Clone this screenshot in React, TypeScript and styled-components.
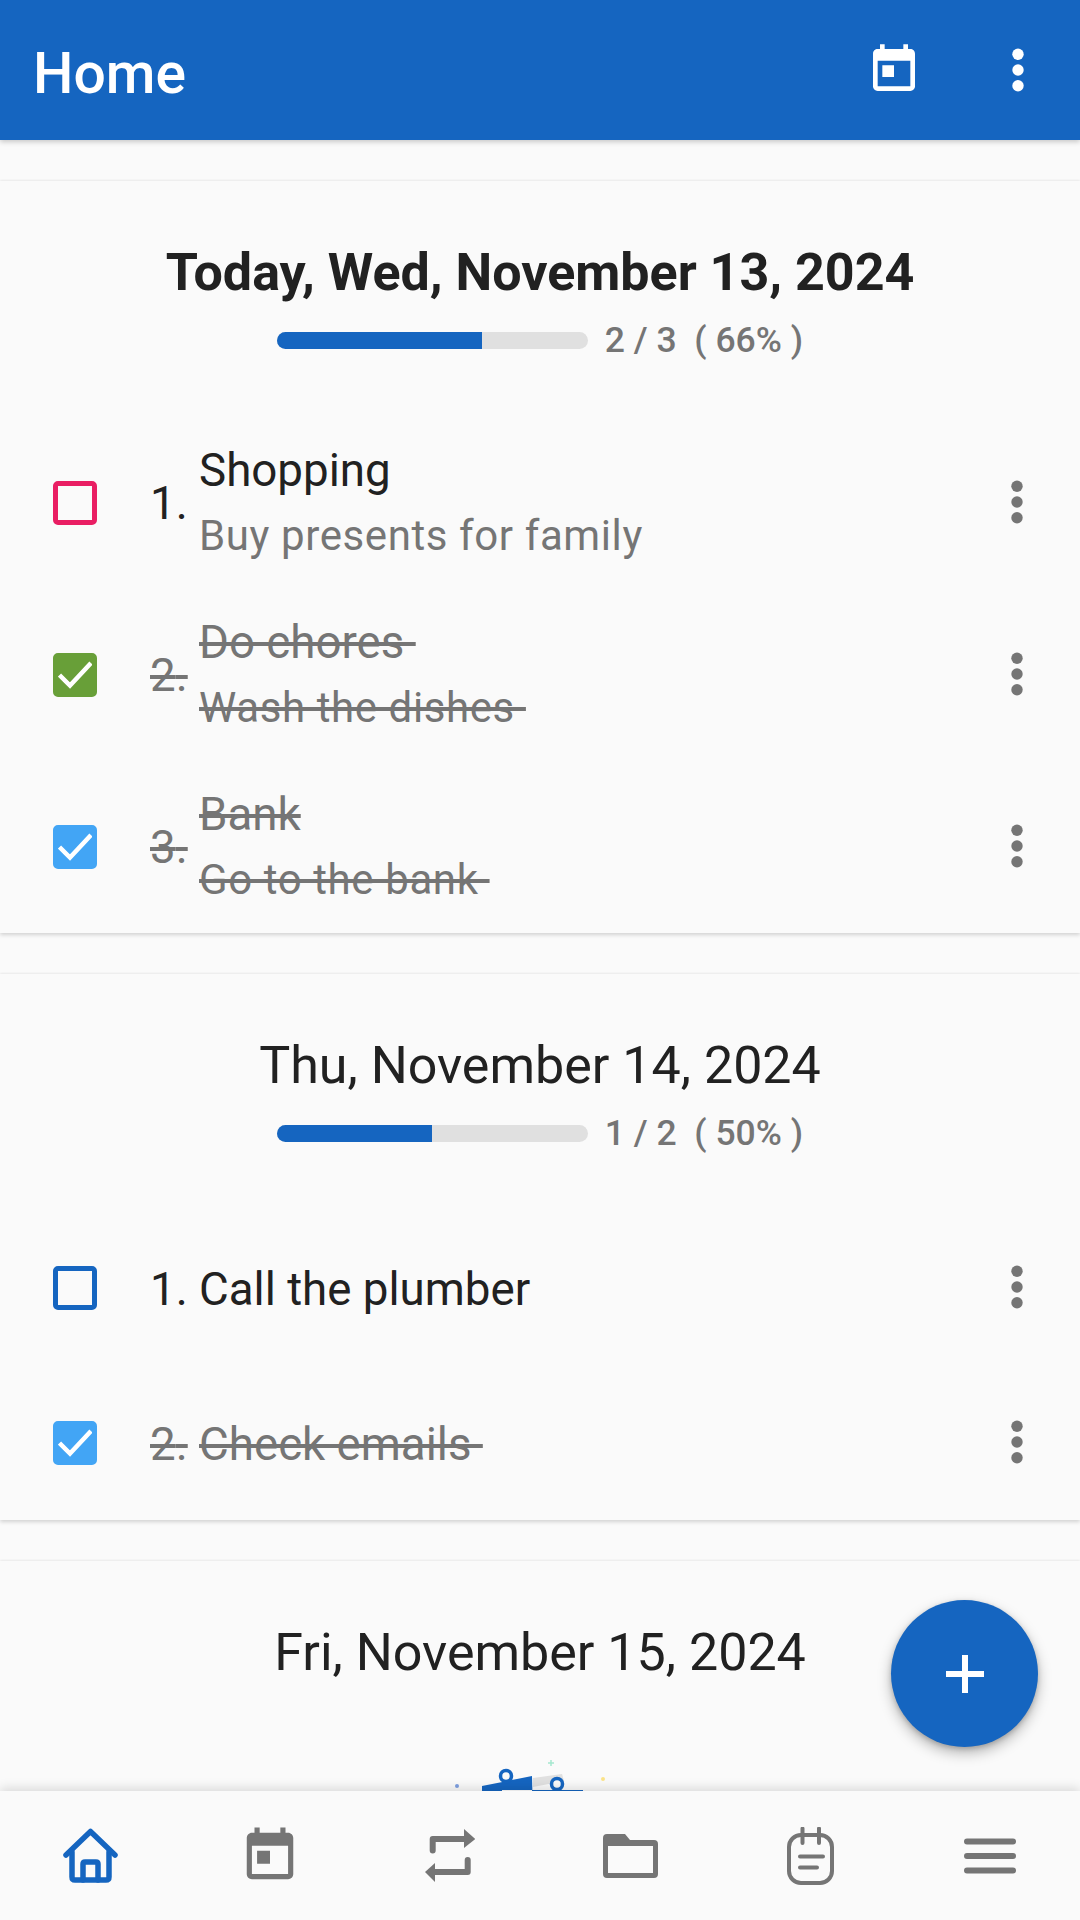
import React from 'react'
import styled, { createGlobalStyle } from 'styled-components'

const BLUE = '#1565c0'
const GREY = '#757575'
const INK = '#212121'

const GlobalStyle = createGlobalStyle`
    html, body {
        margin: 0;
        padding: 0;
        background: #fafafa;
    }
    * {
        box-sizing: border-box;
    }
`

const Screen = styled.div`
    width: 1080px;
    height: 1920px;
    display: flex;
    flex-direction: column;
    overflow: hidden;
    position: relative;
    background: #fafafa;
    font-family: Roboto, "Noto Sans", sans-serif;
    color: ${INK};
`

const AppBar = styled.header`
    height: 140px;
    flex: none;
    display: flex;
    align-items: center;
    padding: 0 54px 0 33px;
    background: ${BLUE};
    box-shadow: 0 2px 5px rgba(0, 0, 0, 0.2);
    position: relative;
    z-index: 2;
`

const AppTitle = styled.h1`
    flex: 1;
    margin: 6px 0 0;
    font-size: 57px;
    font-weight: 500;
    color: #fff;
`

const AppActions = styled.div`
    display: flex;
    align-items: center;
    gap: 88px;
    margin-top: -1px;
    color: #fff;
`

const Main = styled.main`
    flex: 1;
    min-height: 0;
    overflow: hidden;
    padding-top: 41px;
`

const Card = styled.section`
    margin-bottom: 41px;
    background: #fafafa;
    box-shadow: 0 2px 4px rgba(0, 0, 0, 0.16), 0 -1px 2px rgba(0, 0, 0, 0.05);
`

const DayHeader = styled.div`
    height: 236px;
    padding-top: 61px;
    display: flex;
    flex-direction: column;
    align-items: center;
`

const DayTitle = styled.h2<{ $today?: boolean }>`
    margin: 0;
    height: 62px;
    line-height: 62px;
    font-size: 52px;
    font-weight: ${(p) => (p.$today ? 700 : 400)};
    color: ${INK};
`

const ProgressRow = styled.div`
    margin-top: 19px;
    height: 34px;
    display: flex;
    align-items: center;
    gap: 17px;
`

const Track = styled.div`
    width: 311px;
    height: 17px;
    border-radius: 9px;
    overflow: hidden;
    background: #e0e0e0;
`

const Fill = styled.div<{ $pct: number }>`
    width: ${(p) => p.$pct}%;
    height: 100%;
    background: ${BLUE};
`

const ProgressText = styled.span`
    font-size: 35.5px;
    font-weight: 500;
    color: ${GREY};
    white-space: pre;
`

const Row = styled.div<{ $height: number }>`
    height: ${(p) => p.$height}px;
    display: flex;
    align-items: center;
    padding: 0 55px 0 53px;
    color: ${GREY};
`

const CheckBox = styled.span<{ $color: string; $checked?: boolean }>`
    width: 44px;
    height: 44px;
    flex: none;
    display: flex;
    align-items: center;
    justify-content: center;
    border-radius: 5px;
    border: 5px solid ${(p) => p.$color};
    background: ${(p) => (p.$checked ? p.$color : 'transparent')};
`

const RowNumber = styled.span<{ $done?: boolean; $single?: boolean }>`
    margin: ${(p) => (p.$single ? '3px' : '0')} 0 0 53px;
    width: 49px;
    flex: none;
    font-size: 45.7px;
    white-space: pre;
    color: ${(p) => (p.$done ? GREY : INK)};
    text-decoration: ${(p) => (p.$done ? 'line-through' : 'none')};
`

const RowText = styled.div<{ $single?: boolean }>`
    flex: 1;
    min-width: 0;
    margin-top: ${(p) => (p.$single ? '3px' : '0')};
`

const TaskName = styled.div<{ $done?: boolean }>`
    height: 65px;
    line-height: 65px;
    font-size: 45.7px;
    white-space: pre;
    color: ${(p) => (p.$done ? GREY : INK)};
    text-decoration: ${(p) => (p.$done ? 'line-through' : 'none')};
`

const TaskNote = styled.div<{ $done?: boolean }>`
    height: 65px;
    line-height: 65px;
    font-size: 42px;
    letter-spacing: 0.6px;
    white-space: pre;
    color: ${GREY};
    text-decoration: ${(p) => (p.$done ? 'line-through' : 'none')};
`

const RowMore = styled.span`
    display: flex;
    margin-bottom: 2px;
`

const Illustration = styled.svg`
    display: block;
    flex: none;
    margin-top: 73px;
`

const Fab = styled.button`
    position: absolute;
    right: 42px;
    bottom: 173px;
    width: 147px;
    height: 147px;
    padding: 0;
    border: none;
    border-radius: 50%;
    display: flex;
    align-items: center;
    justify-content: center;
    color: #fff;
    background: ${BLUE};
    box-shadow: 0 6px 14px rgba(0, 0, 0, 0.28), 0 2px 5px rgba(0, 0, 0, 0.18);
    z-index: 3;
`

const BottomNav = styled.nav`
    height: 129px;
    flex: none;
    display: flex;
    background: #fafafa;
    box-shadow: 0 -3px 10px rgba(0, 0, 0, 0.13);
    position: relative;
    z-index: 2;
`

const NavItem = styled.div<{ $active?: boolean }>`
    flex: 1;
    display: flex;
    align-items: center;
    justify-content: center;
    color: ${(p) => (p.$active ? BLUE : GREY)};
`

const EVENT_PATH = 'M19 3h-1V1h-2v2H8V1H6v2H5c-1.11 0-1.99.9-1.99 2L3 19c0 1.1.89 2 2 2h14c1.1 0 2-.9 2-2V5c0-1.1-.9-2-2-2zm0 16H5V8h14v11zM7 10h5v5H7z'

const EventIcon = ({ size }: { size: number }) => (
    <svg width={size} height={size} viewBox="0 0 24 24" fill="currentColor">
        <path d={EVENT_PATH} />
    </svg>
)

const MoreIcon = ({ color }: { color: string }) => (
    <svg width="16" height="48" viewBox="0 0 16 48" fill={color}>
        <circle cx="8" cy="8.3" r="5.7" />
        <circle cx="8" cy="24" r="5.7" />
        <circle cx="8" cy="39.7" r="5.7" />
    </svg>
)

const CheckMark = () => (
    <svg width="34" height="34" viewBox="0 0 34 34" fill="none" stroke="#fff" strokeWidth="4.5">
        <path d="M1.5 17 L12 27.5 L33 5" />
    </svg>
)

const HomeIcon = () => (
    <svg width="55" height="55" viewBox="0 0 55 55" fill="none" stroke="currentColor" strokeWidth="5.5" strokeLinejoin="round" strokeLinecap="round">
        <path d="M3 27 L27.5 3.5 L52 27" />
        <path d="M9 24 V49 Q9 52 12 52 H43 Q46 52 46 49 V24" />
        <path d="M20 52 V36 Q20 34 22 34 H33 Q35 34 35 36 V52" />
    </svg>
)

const RepeatIcon = () => (
    <svg width="50" height="54" viewBox="0 0 50 54" fill="currentColor">
        <path d="M7.7 21.5 V10 H40 M42.7 31 V43 H10" fill="none" stroke="currentColor" strokeWidth="6" strokeLinecap="round" strokeLinejoin="round" />
        <path d="M39 0 L50.3 10 L39 19 Z" />
        <path d="M10 34 L0 43 L10 53 Z" />
    </svg>
)

const FolderIcon = () => (
    <svg width="55" height="44" viewBox="0 0 55 44" fill="currentColor" fillRule="evenodd">
        <path d="M4 0 H22 L27 6 H51 Q55 6 55 10 V40 Q55 44 51 44 H4 Q0 44 0 40 V4 Q0 0 4 0 Z M5 12 V39 H50 V12 Z" />
    </svg>
)

const NotepadIcon = () => (
    <svg width="47" height="58" viewBox="0 0 47 58" fill="none" stroke="currentColor" strokeWidth="4" strokeLinecap="round">
        <rect x="2" y="8" width="43" height="48" rx="12" />
        <path d="M15.5 1.5 V16 M32 1.5 V16 M13 29.5 H36 M13 40.5 H30" />
    </svg>
)

const MenuIcon = () => (
    <svg width="52" height="36" viewBox="0 0 52 36" fill="none" stroke="currentColor" strokeWidth="6" strokeLinecap="round">
        <path d="M3 3.5 H49 M3 18 H49 M3 32.5 H49" />
    </svg>
)

const PlusIcon = () => (
    <svg width="38" height="38" viewBox="0 0 38 38" fill="none" stroke="currentColor" strokeWidth="6">
        <path d="M19 0 V38 M0 19 H38" />
    </svg>
)

interface ITask {
    name: string,
    note?: string,
    done?: boolean,
    color: string
}

const TaskRow: React.FC<{ task: ITask, index: number, height: number }> = ({ task, index, height }) => (
    <Row $height={height}>
        <CheckBox $color={task.color} $checked={task.done}>
            {task.done && <CheckMark />}
        </CheckBox>
        <RowNumber $done={task.done} $single={!task.note}>{index + 1}.</RowNumber>
        <RowText $single={!task.note}>
            <TaskName $done={task.done}>{task.name}</TaskName>
            {task.note && <TaskNote $done={task.done}>{task.note}</TaskNote>}
        </RowText>
        <RowMore>
            <MoreIcon color={GREY} />
        </RowMore>
    </Row>
)

const DayCard: React.FC<{ title: string, today?: boolean, tasks: ITask[], rowHeight: number }> = ({ title, today, tasks, rowHeight }) => {
    const done = tasks.filter((t) => t.done).length
    const pct = Math.floor((done / tasks.length) * 100)

    return (
        <Card>
            <DayHeader>
                <DayTitle $today={today}>{title}</DayTitle>
                <ProgressRow>
                    <Track>
                        <Fill $pct={pct} />
                    </Track>
                    <ProgressText>{`${done} / ${tasks.length}  ( ${pct}% )`}</ProgressText>
                </ProgressRow>
            </DayHeader>
            {tasks.map((task, i) => (
                <TaskRow key={task.name} task={task} index={i} height={rowHeight} />
            ))}
        </Card>
    )
}

// the trailing spaces are in the saved tasks, the strike runs on over them
const today: ITask[] = [
    { name: 'Shopping', note: 'Buy presents for family', color: '#e91e63' },
    { name: 'Do chores ', note: 'Wash the dishes ', done: true, color: '#689f38' },
    { name: 'Bank', note: 'Go to the bank ', done: true, color: '#42a5f5' }
]

const tomorrow: ITask[] = [
    { name: 'Call the plumber', color: BLUE },
    { name: 'Check emails ', done: true, color: '#42a5f5' }
]

const App: React.FC = () => (
    <Screen>
        <GlobalStyle />
        <AppBar>
            <AppTitle>Home</AppTitle>
            <AppActions>
                <EventIcon size={56} />
                <MoreIcon color="#fff" />
            </AppActions>
        </AppBar>
        <Main>
            <DayCard title="Today, Wed, November 13, 2024" today tasks={today} rowHeight={172} />
            <DayCard title="Thu, November 14, 2024" tasks={tomorrow} rowHeight={155} />
            <Card>
                <DayHeader>
                    <DayTitle>Fri, November 15, 2024</DayTitle>
                    <Illustration width="200" height="60" viewBox="0 0 200 60">
                        <path d="M93 21 L122 17 L124 24 L93 30 Z" fill="#e0e0e0" />
                        <path d="M30 34 H42 V36 H30 Z M143 34 H173 V36 H143 Z" fill="#e0e0e0" />
                        <path d="M42 29 L92 19 L93 60 H42 Z" fill={BLUE} />
                        <rect x="62" y="33" width="30" height="27" fill="#fff" />
                        <rect x="92" y="33" width="51" height="27" fill={BLUE} />
                        <circle cx="66" cy="19" r="5.5" fill="#fafafa" stroke={BLUE} strokeWidth="3.5" />
                        <circle cx="117" cy="27" r="5.5" fill="#fafafa" stroke={BLUE} strokeWidth="3.5" />
                        <circle cx="17" cy="29" r="2" fill="#7e9fe0" />
                        <path d="M111 3 V9 M108 6 H114" stroke="#a5e8cf" strokeWidth="1.5" />
                        <circle cx="163" cy="22" r="2" fill="#fbe38a" />
                    </Illustration>
                </DayHeader>
            </Card>
        </Main>
        <Fab aria-label="Add">
            <PlusIcon />
        </Fab>
        <BottomNav>
            <NavItem $active><HomeIcon /></NavItem>
            <NavItem><EventIcon size={62} /></NavItem>
            <NavItem><RepeatIcon /></NavItem>
            <NavItem><FolderIcon /></NavItem>
            <NavItem><NotepadIcon /></NavItem>
            <NavItem><MenuIcon /></NavItem>
        </BottomNav>
    </Screen>
)

export default App
